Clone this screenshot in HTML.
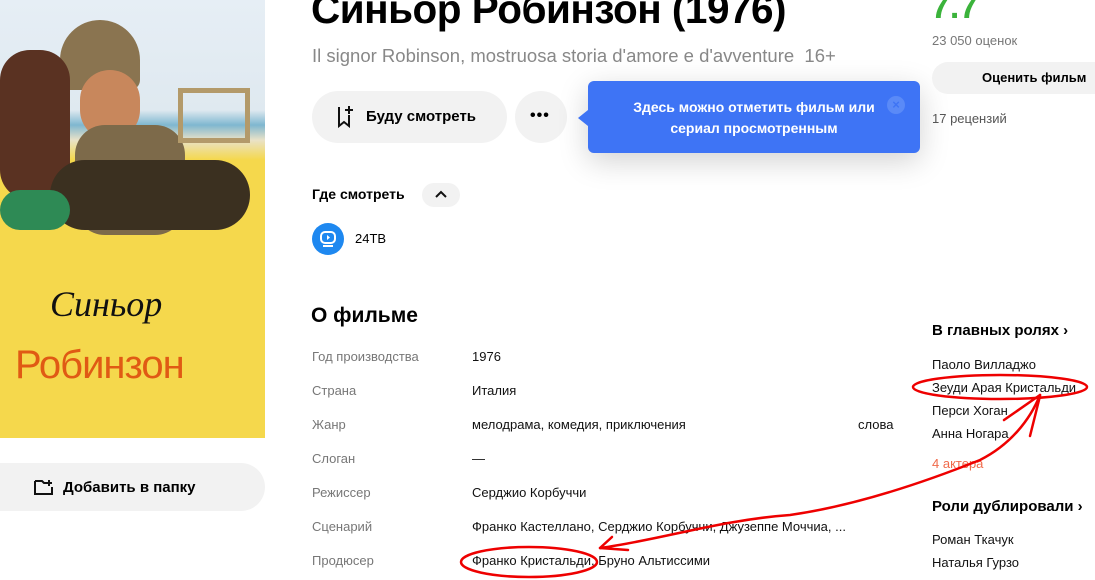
<!DOCTYPE html>
<html><head><meta charset="utf-8"><style>
*{margin:0;padding:0;box-sizing:border-box}
body{width:1095px;height:580px;overflow:hidden;background:#fff;font-family:"Liberation Sans",sans-serif;color:#000;position:relative}
.abs{position:absolute;white-space:nowrap}
.poster{position:absolute;left:0;top:0;width:265px;height:438px;background:linear-gradient(#e6eef5 0,#dfe9f0 110px,#7fb7d0 125px,#e9e2c8 140px,#f5d84c 160px,#f5d84c 100%);overflow:hidden}
.btn{position:absolute;background:#f2f2f2;border-radius:30px}
.lbl{position:absolute;left:312px;font-size:13px;color:#777}
.val{position:absolute;left:472px;font-size:13px;color:#111}
.r{position:absolute;left:932px;font-size:13px;color:#111}
</style></head><body>
<div class="poster">
 <div class="abs" style="left:60px;top:20px;width:80px;height:70px;background:#8a7450;border-radius:40px 40px 10px 10px"></div>
 <div class="abs" style="left:0;top:50px;width:70px;height:150px;background:#5a3222;border-radius:30px"></div>
 <div class="abs" style="left:80px;top:70px;width:60px;height:70px;background:#c8875c;border-radius:30px"></div>
 <div class="abs" style="left:75px;top:125px;width:110px;height:110px;background:#7d6a4a;border-radius:30px"></div>
 <div class="abs" style="left:50px;top:160px;width:200px;height:70px;background:#3b3020;border-radius:40px"></div>
 <div class="abs" style="left:0;top:190px;width:70px;height:40px;background:#2e8a55;border-radius:20px"></div>
 <div class="abs" style="left:178px;top:88px;width:72px;height:55px;border:5px solid #b39a6a"></div>
 <div class="abs" style="left:50px;top:283px;font:italic 36px 'Liberation Serif',serif;color:#111">Синьор</div>
 <div class="abs" style="left:15px;top:343px;font-size:40px;color:#e05a14;letter-spacing:-1px">Робинзон</div>
</div>
<div class="btn" style="left:-30px;top:463px;width:295px;height:48px"></div>
<svg class="abs" style="left:33px;top:478px" width="22" height="18" viewBox="0 0 22 18"><path d="M2 3v13h17V9M2 3h7l2 2h3M16 2v6M13 5h6" stroke="#111" stroke-width="2" fill="none"/></svg>
<div class="abs" style="left:63px;top:479px;font-size:15px;font-weight:bold">Добавить в папку</div>

<div class="abs" style="left:311px;top:-14px;font-size:40.5px;font-weight:bold;letter-spacing:-0.5px">Синьор Робинзон (1976)</div>
<div class="abs" style="left:312px;top:45px;font-size:18.5px;color:#888">Il signor Robinson, mostruosa storia d'amore e d'avventure&nbsp; 16+</div>
<div class="btn" style="left:312px;top:91px;width:195px;height:52px"></div>
<svg class="abs" style="left:336px;top:104px" width="22" height="24" viewBox="0 0 22 24"><path d="M3 3v19l5-4 5 4V11M13 2v8M9 6h8" stroke="#111" stroke-width="2" fill="none"/></svg>
<div class="abs" style="left:366px;top:108px;font-size:15px;font-weight:bold">Буду смотреть</div>
<div class="btn" style="left:515px;top:91px;width:52px;height:52px;border-radius:50%"></div>
<div class="abs" style="left:530px;top:107px;font-size:16px;font-weight:bold;letter-spacing:1px">•••</div>
<div class="abs" style="left:588px;top:81px;width:332px;height:72px;background:#3e74f5;border-radius:6px;box-shadow:0 8px 30px rgba(0,0,0,.18)"></div>
<div class="abs" style="left:578px;top:110px;width:0;height:0;border-top:8px solid transparent;border-bottom:8px solid transparent;border-right:10px solid #3e74f5"></div>
<div class="abs" style="left:588px;top:97px;width:332px;text-align:center;font-size:14px;font-weight:bold;color:#fff;line-height:21px;white-space:normal">Здесь можно отметить фильм или<br>сериал просмотренным</div>
<div class="abs" style="left:887px;top:96px;width:18px;height:18px;border-radius:50%;background:#5a8af7;color:#3e74f5;font-size:13px;text-align:center;line-height:18px;font-weight:bold">×</div>

<div class="abs" style="left:312px;top:186px;font-size:14px;font-weight:bold">Где смотреть</div>
<div class="abs" style="left:422px;top:183px;width:38px;height:24px;border-radius:12px;background:#f2f2f2"></div>
<svg class="abs" style="left:434px;top:189px" width="14" height="10"><path d="M2 8l5-5 5 5" stroke="#111" stroke-width="2" fill="none"/></svg>
<div class="abs" style="left:312px;top:223px;width:32px;height:32px;border-radius:50%;background:#1e88f0"></div>
<svg class="abs" style="left:318px;top:229px" width="20" height="20"><rect x="3" y="3" width="14" height="11" rx="4" fill="none" stroke="#fff" stroke-width="2"/><path d="M9 6l3 2.5L9 11z" fill="#fff"/><path d="M5 17h10" stroke="#fff" stroke-width="2"/></svg>
<div class="abs" style="left:355px;top:231px;font-size:13px">24ТВ</div>

<div class="abs" style="left:311px;top:304px;font-size:21px;font-weight:bold">О фильме</div>
<div class="lbl" style="top:349px">Год производства</div><div class="val" style="top:349px">1976</div>
<div class="lbl" style="top:383px">Страна</div><div class="val" style="top:383px">Италия</div>
<div class="lbl" style="top:417px">Жанр</div><div class="val" style="top:417px">мелодрама, комедия, приключения</div><div class="val" style="left:858px;top:417px">слова</div>
<div class="lbl" style="top:451px">Слоган</div><div class="val" style="top:451px">—</div>
<div class="lbl" style="top:485px">Режиссер</div><div class="val" style="top:485px">Серджио Корбуччи</div>
<div class="lbl" style="top:519px">Сценарий</div><div class="val" style="top:519px">Франко Кастеллано, Серджио Корбуччи, Джузеппе Моччиа, ...</div>
<div class="lbl" style="top:553px">Продюсер</div><div class="val" style="top:553px">Франко Кристальди, Бруно Альтиссими</div>

<div class="abs" style="left:931px;top:-12px;font-size:34px;font-weight:bold;color:#3bb33b">7.7</div>
<div class="abs" style="left:932px;top:33px;font-size:13px;color:#777">23 050 оценок</div>
<div class="btn" style="left:932px;top:62px;width:180px;height:32px;border-radius:16px"></div>
<div class="abs" style="left:982px;top:70px;font-size:13px;font-weight:bold">Оценить фильм</div>
<div class="abs" style="left:932px;top:111px;font-size:13px;color:#555">17 рецензий</div>
<div class="abs" style="left:932px;top:322px;font-size:15px;font-weight:bold">В главных ролях ›</div>
<div class="r" style="top:357px">Паоло Вилладжо</div>
<div class="r" style="top:380px">Зеуди Арая Кристальди</div>
<div class="r" style="top:403px">Перси Хоган</div>
<div class="r" style="top:426px">Анна Ногара</div>
<div class="r" style="top:456px;color:#f06a4a">4 актера</div>
<div class="abs" style="left:932px;top:498px;font-size:15px;font-weight:bold">Роли дублировали ›</div>
<div class="r" style="top:532px">Роман Ткачук</div>
<div class="r" style="top:555px">Наталья Гурзо</div>

<svg class="abs" style="left:0;top:0" width="1095" height="580"><g stroke="#e00" stroke-width="2.5" fill="none" stroke-linecap="round">
<ellipse cx="529" cy="562" rx="68" ry="15"/>
<ellipse cx="1000" cy="387" rx="87" ry="12"/>
<path d="M600 548C660 540 720 520 790 515C860 505 930 480 980 460C1010 445 1030 420 1040 395"/>
<path d="M600 548L612 537M600 548L628 550"/>
<path d="M1040 395L1004 420M1040 396L1030 436"/>
</g></svg>
</body></html>
